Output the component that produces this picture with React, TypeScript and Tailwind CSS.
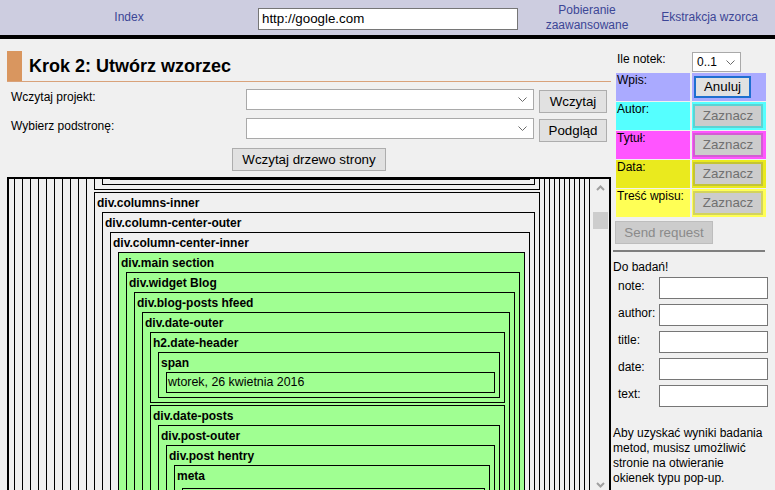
import React from "react";

type TNode = { label: string; green?: boolean; leaf?: boolean; filler?: boolean; children?: TNode[] };

const tree: TNode = {
  label: "div.columns-inner",
  children: [
    {
      label: "div.column-center-outer",
      children: [
        {
          label: "div.column-center-inner",
          children: [
            {
              label: "div.main section",
              green: true,
              children: [
                {
                  label: "div.widget Blog",
                  green: true,
                  children: [
                    {
                      label: "div.blog-posts hfeed",
                      green: true,
                      children: [
                        {
                          label: "div.date-outer",
                          green: true,
                          children: [
                            {
                              label: "h2.date-header",
                              green: true,
                              children: [
                                {
                                  label: "span",
                                  green: true,
                                  children: [{ label: "wtorek, 26 kwietnia 2016", leaf: true, green: true }],
                                },
                              ],
                            },
                            {
                              label: "div.date-posts",
                              green: true,
                              children: [
                                {
                                  label: "div.post-outer",
                                  green: true,
                                  children: [
                                    {
                                      label: "div.post hentry",
                                      green: true,
                                      children: [
                                        {
                                          label: "meta",
                                          green: true,
                                          children: [{ label: "", filler: true, green: true }],
                                        },
                                      ],
                                    },
                                  ],
                                },
                              ],
                            },
                          ],
                        },
                      ],
                    },
                  ],
                },
              ],
            },
          ],
        },
      ],
    },
  ],
};

function Box({ node, first }: { node: TNode; first: boolean }) {
  if (node.filler) {
    return <div className="mt-[3px] h-[60px] border border-black bg-[#a0ff92]" />;
  }
  if (node.leaf) {
    return (
      <div
        className={`${first ? "" : "mt-[2px]"} h-[21px] border border-black bg-[#a0ff92] pl-[1px] text-[12.4px] leading-[19px] whitespace-nowrap overflow-hidden font-normal`}
      >
        {node.label}
      </div>
    );
  }
  return (
    <div
      className={`${first ? "" : "mt-[2px]"} border border-black pl-[2px] pr-[4px] pb-[4px] ${node.green ? "bg-[#a0ff92]" : ""}`}
    >
      <div className="h-[19px] leading-[20px] font-bold whitespace-nowrap overflow-hidden">{node.label}</div>
      {node.children && node.children.length > 0 && (
        <div className="ml-[5px]">
          {node.children.map((c, i) => (
            <Box key={i} node={c} first={i === 0} />
          ))}
        </div>
      )}
    </div>
  );
}

function Ancestors({ depth, children }: { depth: number; children: React.ReactNode }) {
  if (depth === 0) return <>{children}</>;
  return (
    <div className="border-x border-black pl-[7px] pr-[4px]">
      <Ancestors depth={depth - 1}>{children}</Ancestors>
    </div>
  );
}

function Chevron() {
  return (
    <svg width="9" height="5" viewBox="0 0 9 5">
      <path d="M0.5 0.5 L4.5 4.5 L8.5 0.5" fill="none" stroke="#6b6b6b" strokeWidth="1" />
    </svg>
  );
}

function FakeSelect({ w, text }: { w: string; text?: string }) {
  return (
    <div className={`${w} h-[21px] bg-white border border-[#a9a9a9] flex items-center justify-between pl-[4px] pr-[6px]`}>
      <span className="text-[12px]">{text ?? ""}</span>
      <Chevron />
    </div>
  );
}

const btn = "h-[23px] bg-[#e1e1e1] border border-[#adadad] text-[13.33px] leading-[21px] text-black";

function ColorRow({ label, cell, children }: { label: string; cell: string; children: React.ReactNode }) {
  return (
    <div className="flex gap-[2px] h-[28px]">
      <div className={`w-[74px] ${cell} pl-[1px] leading-[14px] whitespace-nowrap`}>{label}</div>
      <div className={`w-[74px] ${cell}`}>{children}</div>
    </div>
  );
}

function Zaznacz() {
  return (
    <div className="ml-[1px] mt-[2px] w-[70px] h-[24px] border-2 border-[rgba(110,110,110,0.3)] bg-[#cccccc] bg-clip-padding text-[#707070] text-[13.33px] leading-[20px] text-center">
      Zaznacz
    </div>
  );
}

export default function App() {
  return (
    <div className="w-[775px] h-[490px] overflow-hidden bg-[#f0f0f0] text-black text-[12px] font-['Liberation_Sans',Arial,sans-serif]">
      {/* top bar */}
      <div className="h-[35px] bg-[#cdcde0] flex items-start text-[#3c4696]">
        <div className="w-[258px] text-center leading-[14px] mt-[10px]">Index</div>
        <div className="w-[260px] h-[22px] mt-[8px] bg-white border border-[#767676] pl-[3px] text-black text-[13.33px] leading-[20px]">
          http://google.com
        </div>
        <div className="w-[138px] text-center leading-[15px] mt-[3px]">
          Pobieranie
          <br />
          zaawansowane
        </div>
        <div className="w-[107px] text-center leading-[14px] mt-[10px]">Ekstrakcja wzorca</div>
      </div>
      <div className="h-[4px] bg-black" />

      <div className="flex pl-[7px]">
        {/* left panel */}
        <div className="w-[604px]">
          <div className="mt-[12px] flex h-[31px] border-b border-[#d9a27a]">
            <div className="w-[15px] h-[30px] bg-[#d9965f]" />
            <div className="ml-[7px] text-[18px] font-bold leading-[30px]">Krok 2: Utwórz wzorzec</div>
          </div>

          <div className="mt-[7px] flex items-start h-[24px]">
            <div className="w-[239px] pl-[4px] pt-px leading-[14px]">Wczytaj projekt:</div>
            <FakeSelect w="w-[288px]" />
            <div className={`${btn} ml-[5px] mt-px w-[68px] text-center`}>Wczytaj</div>
          </div>
          <div className="mt-[5px] flex items-start h-[24px]">
            <div className="w-[239px] pl-[4px] pt-px leading-[14px]">Wybierz podstronę:</div>
            <FakeSelect w="w-[288px]" />
            <div className={`${btn} ml-[5px] mt-px w-[68px] text-center`}>Podgląd</div>
          </div>
          <div className="mt-[6px] flex justify-center">
            <div className={`${btn} w-[154px] text-center`}>Wczytaj drzewo strony</div>
          </div>

          {/* tree */}
          <div className="mt-[6px] h-[316px] border-2 border-black flex overflow-hidden">
            <div className="flex-1 pl-[5px] pr-[2px] overflow-hidden">
              <Ancestors depth={10}>
                <div className="border-x border-b border-black pl-[7px] pr-[4px] pb-[4px]">
                  <div className="border-x border-b border-black pl-[7px] pr-[4px] pb-[4px]">
                    <div className="border-x border-b border-black h-px" />
                  </div>
                </div>
                <Box node={tree} first={false} />
              </Ancestors>
            </div>
            <div className="w-[17px] relative bg-[#f0f0f0]">
              <svg className="absolute left-[4px] top-[6px]" width="9" height="6" viewBox="0 0 9 6">
                <path d="M1 5 L4.5 1.5 L8 5" fill="none" stroke="#a0a0a0" strokeWidth="2" />
              </svg>
              <div className="absolute left-[1px] top-[33px] w-[15px] h-[17px] bg-[#cdcdcd]" />
              <svg className="absolute left-[4px] top-[303px]" width="9" height="6" viewBox="0 0 9 6">
                <path d="M1 1 L4.5 4.5 L8 1" fill="none" stroke="#a0a0a0" strokeWidth="2" />
              </svg>
            </div>
          </div>
        </div>

        {/* right panel */}
        <div className="ml-[2px] w-[162px]">
          <div className="mt-[13px] flex items-start">
            <div className="w-[79px] pl-[4px] leading-[14px]">Ile notek:</div>
            <div className="w-[49px] h-[20px] bg-white border border-[#a9a9a9] flex items-center justify-between pl-[4px] pr-[5px]">
              <span className="text-[12px]">0..1</span>
              <Chevron />
            </div>
          </div>

          <div className="ml-[3px] mt-[1px] flex flex-col gap-[1px]">
            <ColorRow label="Wpis:" cell="bg-[#aaaaff]">
              <div className="ml-[2px] mt-[3px] w-[57px] h-[22px] bg-[#e1e1e1] border-2 border-[#1e6fd0] text-[13.33px] leading-[18px] text-center">
                Anuluj
              </div>
            </ColorRow>
            <ColorRow label="Autor:" cell="bg-[#55ffff]">
              <Zaznacz />
            </ColorRow>
            <ColorRow label="Tytuł:" cell="bg-[#ff55ff]">
              <Zaznacz />
            </ColorRow>
            <ColorRow label="Data:" cell="bg-[#eaea1e]">
              <Zaznacz />
            </ColorRow>
            <ColorRow label="Treść wpisu:" cell="bg-[#ffff55]">
              <Zaznacz />
            </ColorRow>
          </div>

          <div className="ml-[2px] mt-[4px] w-[98px] h-[23px] bg-[#cccccc] border border-[#bdbdbd] text-[#8a8a8a] text-[13.33px] leading-[21px] text-center">
            Send request
          </div>

          <div className="mt-[6px] w-[152px] h-[2px] bg-[#7f7f7f]" />

          <div className="mt-[8px] leading-[14px]">Do badań!</div>

          <div className="mt-[3px] flex flex-col gap-[5px]">
            {["note:", "author:", "title:", "date:", "text:"].map((l) => (
              <div key={l} className="flex items-center h-[22px]">
                <div className="w-[46px] pl-[5px] pb-[4px] leading-[14px]">{l}</div>
                <div className="w-[109px] h-[22px] bg-white border border-[#767676]" />
              </div>
            ))}
          </div>

          <div className="mt-[19px] leading-[15px] whitespace-nowrap">
            Aby uzyskać wyniki badania
            <br />
            metod, musisz umożliwić
            <br />
            stronie na otwieranie
            <br />
            okienek typu pop-up.
          </div>
        </div>
      </div>
    </div>
  );
}
